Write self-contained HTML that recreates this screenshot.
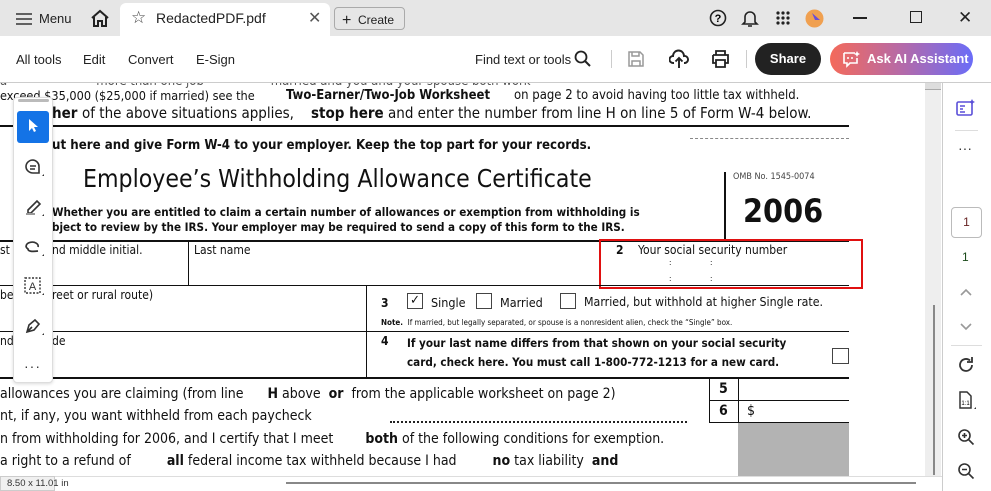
<!DOCTYPE html><html><head><style>
*{margin:0;padding:0;box-sizing:border-box}
body{width:991px;height:491px;overflow:hidden;background:#fff;font-family:"Liberation Sans",sans-serif;position:relative;color:#222}
.a{position:absolute;white-space:nowrap}
.pdf{font-family:"DejaVu Sans Condensed","Liberation Sans",sans-serif;color:#111}
.b{font-weight:bold}
.hl{position:absolute;background:#111;height:1.5px}
.vl{position:absolute;background:#111;width:1px}
svg{position:absolute}
</style></head><body>
<!-- tab bar -->
<div class="a" style="left:0;top:0;width:991px;height:36px;background:#e6e6e6"></div>
<svg style="left:16px;top:12px" width="16" height="14"><path d="M0 2h16M0 7h16M0 12h16" stroke="#333" stroke-width="1.6"/></svg>
<div class="a" style="left:39px;top:11px;font-size:13px">Menu</div>
<svg style="left:90px;top:9px" width="20" height="18"><path d="M2 9L10 2l8 7M4 8v9h4v-5h4v5h4V8" fill="none" stroke="#222" stroke-width="2"/></svg>
<div class="a" style="left:120px;top:3px;width:210px;height:33px;background:#fff;border-radius:6px 6px 0 0"></div>
<div class="a" style="left:131px;top:8px;font-size:17px;color:#444">☆</div>
<div class="a" style="left:156px;top:10px;font-size:14px">RedactedPDF.pdf</div>
<div class="a" style="left:308px;top:8px;font-size:16px;color:#555">✕</div>
<div class="a" style="left:334px;top:7px;width:71px;height:23px;border:1px solid #aaa;border-radius:4px;font-size:12px;padding:3px 0 0 7px"><span style="font-size:16px;position:relative;top:1px">+</span>&nbsp; Create</div>
<svg style="left:709px;top:9px" width="18" height="18"><circle cx="9" cy="9" r="7.5" fill="none" stroke="#222" stroke-width="1.6"/><text x="9" y="13" font-size="11" text-anchor="middle" font-weight="bold" font-family="Liberation Sans">?</text></svg>
<svg style="left:741px;top:9px" width="18" height="19"><path d="M4 13V8a5 5 0 0110 0v5l2 2H2zM7 17h4" fill="none" stroke="#222" stroke-width="1.6"/></svg>
<svg style="left:776px;top:11px" width="15" height="15"><g fill="#222"><circle cx="2" cy="2" r="1.6"/><circle cx="7" cy="2" r="1.6"/><circle cx="12" cy="2" r="1.6"/><circle cx="2" cy="7" r="1.6"/><circle cx="7" cy="7" r="1.6"/><circle cx="12" cy="7" r="1.6"/><circle cx="2" cy="12" r="1.6"/><circle cx="7" cy="12" r="1.6"/><circle cx="12" cy="12" r="1.6"/></g></svg>
<svg style="left:805px;top:9px" width="19" height="19"><circle cx="9.5" cy="9.5" r="9" fill="#f0a050"/><path d="M7 4l8 7-5 0z" fill="#6a4fd8"/></svg>
<div class="a" style="left:853px;top:17px;width:14px;height:1.5px;background:#222"></div>
<div class="a" style="left:910px;top:11px;width:12px;height:12px;border:1.5px solid #222"></div>
<div class="a" style="left:958px;top:8px;font-size:17px">✕</div>
<!-- toolbar -->
<div class="a" style="left:0;top:82px;width:991px;height:1px;background:#ccc"></div>
<div class="a" style="left:16px;top:52px;font-size:13px">All tools</div>
<div class="a" style="left:83px;top:52px;font-size:13px">Edit</div>
<div class="a" style="left:128px;top:52px;font-size:13px">Convert</div>
<div class="a" style="left:196px;top:52px;font-size:13px">E-Sign</div>
<div class="a" style="left:475px;top:52px;font-size:13px">Find text or tools</div>
<svg style="left:574px;top:50px" width="18" height="18"><circle cx="7" cy="7" r="5.5" fill="none" stroke="#222" stroke-width="1.8"/><path d="M11 11l5 5" stroke="#222" stroke-width="2"/></svg>
<div class="a" style="left:611px;top:50px;width:1px;height:18px;background:#ccc"></div>
<svg style="left:628px;top:51px" width="16" height="16"><path d="M1 1h11l3 3v11H1z M4 1v4h7V1 M4 15v-5h8v5" fill="none" stroke="#999" stroke-width="1.5"/></svg>
<svg style="left:669px;top:49px" width="20" height="20"><path d="M5 14H4a3.5 3.5 0 010-7 5.5 5.5 0 0111 0 3.5 3.5 0 011 7h-1M10 19V9M6.5 12.5L10 9l3.5 3.5" fill="none" stroke="#222" stroke-width="1.9"/></svg>
<svg style="left:711px;top:50px" width="19" height="18"><path d="M5 5V1h9v4M2 5h15v8h-3M5 13H2V5M5 10h9v7H5z" fill="none" stroke="#222" stroke-width="1.8"/></svg>
<div class="a" style="left:746px;top:50px;width:1px;height:18px;background:#ccc"></div>
<div class="a" style="left:755px;top:43px;width:66px;height:32px;background:#222;border-radius:16px;color:#fff;font-weight:bold;font-size:13px;text-align:center;line-height:32px">Share</div>
<div class="a" style="left:830px;top:43px;width:143px;height:32px;background:linear-gradient(90deg,#f46a5a,#b56aa8 50%,#6a6cf8);border-radius:16px;color:#fff;font-weight:bold;font-size:13px;line-height:32px;padding-left:37px">Ask AI Assistant</div>
<svg style="left:842px;top:50px" width="20" height="18"><path d="M2 3h11M2 3v10h3v3l3-3h7v-5" fill="none" stroke="#fff" stroke-width="1.6"/><path d="M15 1l1 2 2 1-2 1-1 2-1-2-2-1 2-1z" fill="#fff"/><circle cx="6" cy="8" r="1" fill="#fff"/><circle cx="10" cy="8" r="1" fill="#fff"/></svg>
<!-- pdf page -->
<div class="pdf">
<div class="a" style="left:0;top:74px;font-size:13px;color:#555;clip-path:inset(9px 0 0 0)">a&nbsp;&nbsp;&nbsp;&nbsp;&nbsp;&nbsp;&nbsp;&nbsp;&nbsp;&nbsp;&nbsp;&nbsp;&nbsp;&nbsp;&nbsp;&nbsp;&nbsp;&nbsp;&nbsp;&nbsp;&nbsp;&nbsp;&nbsp;&nbsp;more than one job&nbsp;&nbsp;&nbsp;&nbsp;&nbsp;&nbsp;&nbsp;&nbsp;&nbsp;&nbsp;&nbsp;&nbsp;&nbsp;&nbsp;&nbsp;&nbsp;&nbsp;&nbsp;married and you and your spouse both work</div>
<div class="a" style="left:0;top:88px;font-size:12.6px">exceed $35,000 ($25,000 if married) see the</div>
<div class="a b" style="left:286px;top:88px;font-size:13px">Two-Earner/Two-Job Worksheet</div>
<div class="a" style="left:514px;top:88px;font-size:13px">on page 2 to avoid having too little tax withheld.</div>
<div class="a b" style="left:52px;top:104px;font-size:15px">her</div>
<div class="a" style="left:82px;top:104px;font-size:15px">of the above situations applies,</div>
<div class="a b" style="left:311px;top:104px;font-size:15px">stop here</div>
<div class="a" style="left:388px;top:104px;font-size:15px">and enter the number from line H on line 5 of Form W-4 below.</div>
<div class="hl" style="left:0;top:125px;width:849px"></div>
<div class="a b" style="left:52px;top:138px;font-size:13.2px">ut here and give Form W-4 to your employer. Keep the top part for your records.</div>
<div class="a" style="left:690px;top:138px;width:159px;border-top:1px dashed #888"></div>
<div class="a" style="left:83px;top:164px;font-size:24.6px">Employee’s Withholding Allowance Certificate</div>
<div class="a b" style="left:52px;top:205px;font-size:11.6px;line-height:15px">Whether you are entitled to claim a certain number of allowances or exemption from withholding is<br>bject to review by the IRS. Your employer may be required to send a copy of this form to the IRS.</div>
<div class="vl" style="left:724px;top:172px;height:68px;width:1.5px"></div>
<div class="a" style="left:733px;top:172px;font-size:9px;color:#444">OMB No. 1545-0074</div>
<div class="a b" style="left:743px;top:192px;font-size:32px">2006</div>
<div class="hl" style="left:0;top:240px;width:849px"></div>
<div class="a" style="left:0;top:243px;font-size:12px">st</div>
<div class="a" style="left:52px;top:243px;font-size:12px">nd middle initial.</div>
<div class="vl" style="left:188px;top:240px;height:45px"></div>
<div class="a" style="left:194px;top:243px;font-size:12px">Last name</div>
<div class="a b" style="left:616px;top:243px;font-size:12px">2</div>
<div class="a" style="left:638px;top:243px;font-size:12px">Your social security number</div>
<div class="a" style="left:669px;top:258px;font-size:8px">:</div><div class="a" style="left:710px;top:258px;font-size:8px">:</div>
<div class="a" style="left:669px;top:274px;font-size:8px">:</div><div class="a" style="left:710px;top:274px;font-size:8px">:</div>
<div class="a" style="left:599px;top:239px;width:264px;height:50px;border:2px solid #e01010"></div>
<div class="hl" style="left:0;top:285px;width:849px;height:1px"></div>
<div class="a" style="left:0;top:288px;font-size:12px">be</div>
<div class="a" style="left:52px;top:288px;font-size:12px">reet or rural route)</div>
<div class="vl" style="left:366px;top:285px;height:92px"></div>
<div class="a b" style="left:381px;top:296px;font-size:12px">3</div>
<div class="a" style="left:407px;top:293px;width:16px;height:16px;border:1px solid #444;font-size:13px;text-align:center;line-height:14px">✓</div>
<div class="a" style="left:431px;top:295px;font-size:12.5px">Single</div>
<div class="a" style="left:476px;top:293px;width:16px;height:16px;border:1px solid #444"></div>
<div class="a" style="left:500px;top:295px;font-size:12.5px">Married</div>
<div class="a" style="left:560px;top:293px;width:16px;height:16px;border:1px solid #444"></div>
<div class="a" style="left:584px;top:295px;font-size:12.3px">Married, but withhold at higher Single rate.</div>
<div class="a" style="left:381px;top:318px;font-size:8px"><b>Note.</b>&nbsp; If married, but legally separated, or spouse is a nonresident alien, check the “Single” box.</div>
<div class="hl" style="left:0;top:331px;width:849px;height:1px"></div>
<div class="a" style="left:0;top:334px;font-size:12px">nd</div>
<div class="a" style="left:52px;top:334px;font-size:12px">de</div>
<div class="a b" style="left:381px;top:334px;font-size:12px">4</div>
<div class="a b" style="left:407px;top:334px;font-size:11.6px;line-height:19px">If your last name differs from that shown on your social security<br>card, check here. You must call 1-800-772-1213 for a new card.</div>
<div class="a" style="left:832px;top:348px;width:17px;height:16px;border:1px solid #444"></div>
<div class="hl" style="left:0;top:377px;width:849px"></div>
<div class="a" style="left:0;top:386px;font-size:14px">allowances you are claiming (from line&nbsp;&nbsp;&nbsp;&nbsp;&nbsp; <b>H</b> above&nbsp; <b>or</b>&nbsp; from the applicable worksheet on page 2)</div>
<div class="a" style="left:0;top:408px;font-size:14px">nt, if any, you want withheld from each paycheck</div>
<div class="a" style="left:390px;top:421px;width:297px;border-top:2px dotted #222"></div>
<div class="a" style="left:0;top:431px;font-size:14px">n from withholding for 2006, and I certify that I meet&nbsp;&nbsp;&nbsp;&nbsp;&nbsp;&nbsp;&nbsp; <b>both</b> of the following conditions for exemption.</div>
<div class="a" style="left:0;top:453px;font-size:14px">a right to a refund of&nbsp;&nbsp;&nbsp;&nbsp;&nbsp;&nbsp;&nbsp;&nbsp; <b>all</b> federal income tax withheld because I had&nbsp;&nbsp;&nbsp;&nbsp;&nbsp;&nbsp;&nbsp;&nbsp; <b>no</b> tax liability&nbsp; <b>and</b></div>
<div class="vl" style="left:709px;top:377px;height:45px"></div>
<div class="vl" style="left:738px;top:377px;height:45px"></div>
<div class="a b" style="left:719px;top:381px;font-size:14px">5</div>
<div class="a b" style="left:719px;top:403px;font-size:14px">6</div>
<div class="a" style="left:747px;top:403px;font-size:14px">$</div>
<div class="hl" style="left:709px;top:400px;width:140px;height:1px"></div>
<div class="hl" style="left:709px;top:422px;width:140px;height:1px"></div>
<div class="a" style="left:738px;top:423px;width:111px;height:53px;background:#b3b3b3"></div>
</div>
<!-- left floating toolbar -->
<div class="a" style="left:13px;top:97px;width:40px;height:286px;background:#fff;border:1px solid #ddd;border-radius:4px;box-shadow:0 1px 3px rgba(0,0,0,.15)"></div>
<div class="a" style="left:18px;top:99px;width:31px;height:3px;background:#bbb;border-radius:2px"></div>
<div class="a" style="left:17px;top:111px;width:32px;height:32px;background:#1473e6;border-radius:3px"></div>
<svg style="left:27px;top:118px" width="16" height="16"><path d="M2 1v12l3-3 2 4 2-1-2-4h4z" fill="#fff"/></svg>
<svg style="left:23px;top:157px" width="22" height="22"><path d="M10 3a7 6.5 0 100 13h6v-6.5A7 6.5 0 0010 3z" fill="none" stroke="#333" stroke-width="1.6"/><path d="M7 9h6M7 12h5" stroke="#333" stroke-width="1.4"/><path d="M19 19l2-2v2z" fill="#333"/></svg>
<svg style="left:23px;top:197px" width="22" height="22"><path d="M5 13l9-9 3 3-9 9H5z" fill="none" stroke="#333" stroke-width="1.6"/><path d="M3 17h9" stroke="#999" stroke-width="2"/><path d="M19 19l2-2v2z" fill="#333"/></svg>
<svg style="left:23px;top:237px" width="22" height="22"><path d="M15 10a6 4 0 10-10 2c0 2 3 3 10 2" fill="none" stroke="#333" stroke-width="1.7"/><path d="M19 19l2-2v2z" fill="#333"/></svg>
<svg style="left:23px;top:276px" width="22" height="22"><rect x="2" y="2" width="15" height="15" fill="none" stroke="#333" stroke-width="1.4" stroke-dasharray="2 1.5"/><text x="9.5" y="14" font-size="11" text-anchor="middle" font-family="Liberation Sans" fill="#333">A</text><path d="M19 19l2-2v2z" fill="#333"/></svg>
<svg style="left:23px;top:316px" width="22" height="22"><path d="M4 16l2-7 6-5 4 4-5 6z M4 16l5-5" fill="none" stroke="#333" stroke-width="1.6"/><path d="M19 19l2-2v2z" fill="#333"/></svg>
<div class="a" style="left:24px;top:358px;font-size:14px;color:#333;letter-spacing:1px">···</div>
<!-- vertical scrollbar -->
<div class="a" style="left:925px;top:83px;width:16px;height:393px;background:#eee"></div>
<div class="a" style="left:925px;top:83px;width:16px;height:7px;background:#ddd;border-bottom:1px solid #aaa"></div>
<div class="a" style="left:933px;top:305px;width:2px;height:170px;background:#888"></div>
<!-- right panel -->
<div class="a" style="left:942px;top:83px;width:1px;height:408px;background:#ccc"></div>
<svg style="left:956px;top:99px" width="20" height="18"><rect x="1" y="3" width="15" height="13" rx="1.5" fill="none" stroke="#5a4fd8" stroke-width="1.6"/><path d="M4 7h5M4 10h3M4 13h5" stroke="#5a4fd8" stroke-width="1.4"/><path d="M16 0l1 2 2 1-2 1-1 2-1-2-2-1 2-1z" fill="#5a4fd8"/></svg>
<div class="a" style="left:955px;top:130px;width:23px;height:1px;background:#ddd"></div>
<div class="a" style="left:958px;top:140px;font-size:14px;color:#333">···</div>
<div class="a" style="left:951px;top:207px;width:31px;height:31px;border:1px solid #bbb;border-radius:4px;font-size:12px;text-align:center;line-height:29px;color:#622">1</div>
<div class="a" style="left:962px;top:250px;font-size:12px;color:#1a4a1a">1</div>
<svg style="left:960px;top:288px" width="12" height="10"><path d="M1 7l5-5 5 5" fill="none" stroke="#999" stroke-width="1.6"/></svg>
<svg style="left:960px;top:322px" width="12" height="10"><path d="M1 2l5 5 5-5" fill="none" stroke="#999" stroke-width="1.6"/></svg>
<div class="a" style="left:951px;top:345px;width:31px;height:1px;background:#ddd"></div>
<svg style="left:957px;top:356px" width="18" height="18"><path d="M15 9a6 6 0 11-2-4.5" fill="none" stroke="#333" stroke-width="1.8"/><path d="M15 1v5h-5" fill="none" stroke="#333" stroke-width="1.8"/></svg>
<svg style="left:957px;top:391px" width="20" height="20"><path d="M3 1h7l4 4v12H3z" fill="none" stroke="#333" stroke-width="1.5"/><text x="8.5" y="14" font-size="6" text-anchor="middle" font-family="Liberation Sans">1:1</text><path d="M17 18l2-2v2z" fill="#333"/></svg>
<svg style="left:957px;top:428px" width="18" height="18"><circle cx="7.5" cy="7.5" r="5.5" fill="none" stroke="#333" stroke-width="1.6"/><path d="M11.5 11.5l5 5M5 7.5h5M7.5 5v5" stroke="#333" stroke-width="1.6"/></svg>
<svg style="left:957px;top:462px" width="18" height="18"><circle cx="7.5" cy="7.5" r="5.5" fill="none" stroke="#333" stroke-width="1.6"/><path d="M11.5 11.5l5 5M5 7.5h5" stroke="#333" stroke-width="1.6"/></svg>
<!-- bottom bar -->
<div class="a" style="left:0;top:476px;width:942px;height:15px;background:#fff;border-top:1px solid #ddd"></div>
<div class="a" style="left:0;top:476px;width:55px;height:15px;background:#f0f0f0;border:1px solid #ccc;font-size:9.5px;line-height:13px;padding-left:6px;color:#333">8.50 x 11.01 in</div>
<div class="a" style="left:286px;top:482px;width:630px;height:2px;background:#888"></div>
</body></html>
